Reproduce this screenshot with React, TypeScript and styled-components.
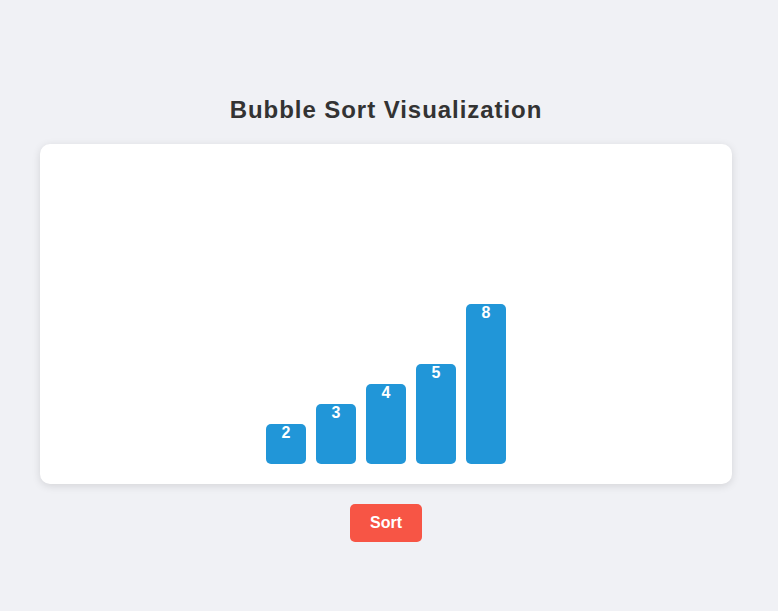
import React from "react";
import styled, { createGlobalStyle } from "styled-components";

const GlobalStyle = createGlobalStyle`
  html, body {
    margin: 0;
    padding: 0;
    background: #f0f1f5;
    font-family: "Liberation Sans", Arial, sans-serif;
  }
`;

const Page = styled.div`
  display: flex;
  flex-direction: column;
  align-items: center;
  padding: 96px 46px 40px 40px;
`;

const Title = styled.h1`
  margin: 0 0 20px;
  font-size: 24px;
  line-height: 28px;
  font-weight: bold;
  letter-spacing: 0.95px;
  color: #333;
`;

const Board = styled.div`
  box-sizing: border-box;
  width: 100%;
  height: 340px;
  padding: 20px;
  background: #fff;
  border-radius: 10px;
  box-shadow: 0 2px 8px rgba(0, 0, 0, 0.12);
  display: flex;
  justify-content: center;
  align-items: flex-end;
  gap: 10px;
`;

const Bar = styled.div<{ value: number }>`
  width: 40px;
  height: ${({ value }) => value * 20}px;
  background: #2196d8;
  border-radius: 5px;
  color: #fff;
  font-weight: bold;
  font-size: 16px;
  line-height: 17px;
  text-align: center;
  box-sizing: border-box;
`;

const SortButton = styled.button`
  margin-top: 20px;
  padding: 10px 20px;
  border: none;
  border-radius: 5px;
  background: #f75545;
  color: #fff;
  font-family: "Liberation Sans", Arial, sans-serif;
  font-weight: bold;
  font-size: 16px;
  line-height: 18px;
  cursor: pointer;
`;

const values = [2, 3, 4, 5, 8];

export default function App() {
  return (
    <>
      <GlobalStyle />
      <Page>
        <Title>Bubble Sort Visualization</Title>
        <Board>
          {values.map((v) => (
            <Bar key={v} value={v}>
              {v}
            </Bar>
          ))}
        </Board>
        <SortButton>Sort</SortButton>
      </Page>
    </>
  );
}
